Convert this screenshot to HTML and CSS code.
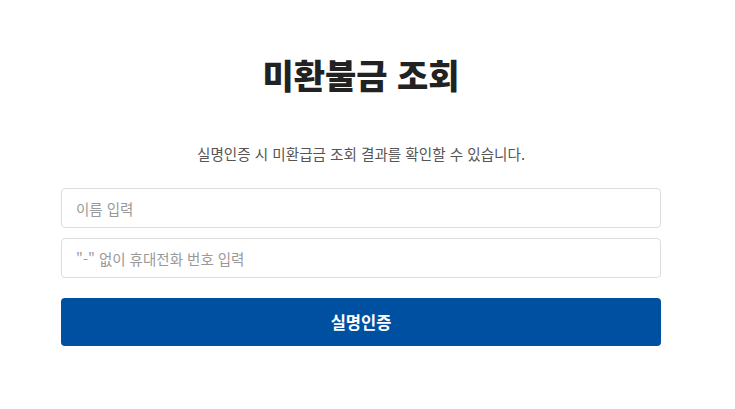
FILE: index.html
```html
<!DOCTYPE html>
<html lang="ko">
<head>
    <meta charset="UTF-8">
    <meta name="viewport" content="width=device-width, initial-scale=1.0">
    <title>미환불금 조회</title>
    <link rel="stylesheet" href="styles.css">
</head>
<body>
    <div class="page">
        <div class="container">
            <h1>미환불금 조회</h1>
            <p class="desc">실명인증 시 미환급금 조회 결과를 확인할 수 있습니다.</p>
            <form class="auth-form">
                <input type="text" placeholder="이름 입력">
                <input type="tel" placeholder="&quot;-&quot; 없이 휴대전화 번호 입력">
                <button type="submit" class="submit-btn">실명인증</button>
            </form>
        </div>
    </div>
</body>
</html>
```

FILE: styles.css
```css
body {
    font-family: "Noto Sans CJK KR", "Noto Sans", sans-serif;
    margin: 0;
    padding: 0;
    background-color: #fff;
}
.page {
    max-width: 722px;
}
.container {
    max-width: 600px;
    margin: 0 auto;
    padding-top: 49px;
}
h1 {
    text-align: center;
    font-size: 34px;
    font-weight: 900;
    color: #222;
    margin: 0;
    line-height: 52px;
}
.desc {
    text-align: center;
    font-size: 14.6px;
    color: #555;
    margin: 42px 0 0;
    line-height: 22px;
}
.auth-form {
    display: flex;
    flex-direction: column;
    gap: 10px;
    margin-top: 23px;
}
input {
    height: 40px;
    box-sizing: border-box;
    padding: 0 14px;
    border: 1px solid #ddd;
    border-radius: 4px;
    font-family: inherit;
    font-size: 14.5px;
    color: #333;
}
input::placeholder {
    color: #999;
}
.submit-btn {
    margin-top: 10px;
    height: 48px;
    border: none;
    border-radius: 4px;
    background-color: #0050a2;
    color: #fff;
    font-family: inherit;
    font-size: 16.5px;
    font-weight: bold;
    cursor: pointer;
}
```
